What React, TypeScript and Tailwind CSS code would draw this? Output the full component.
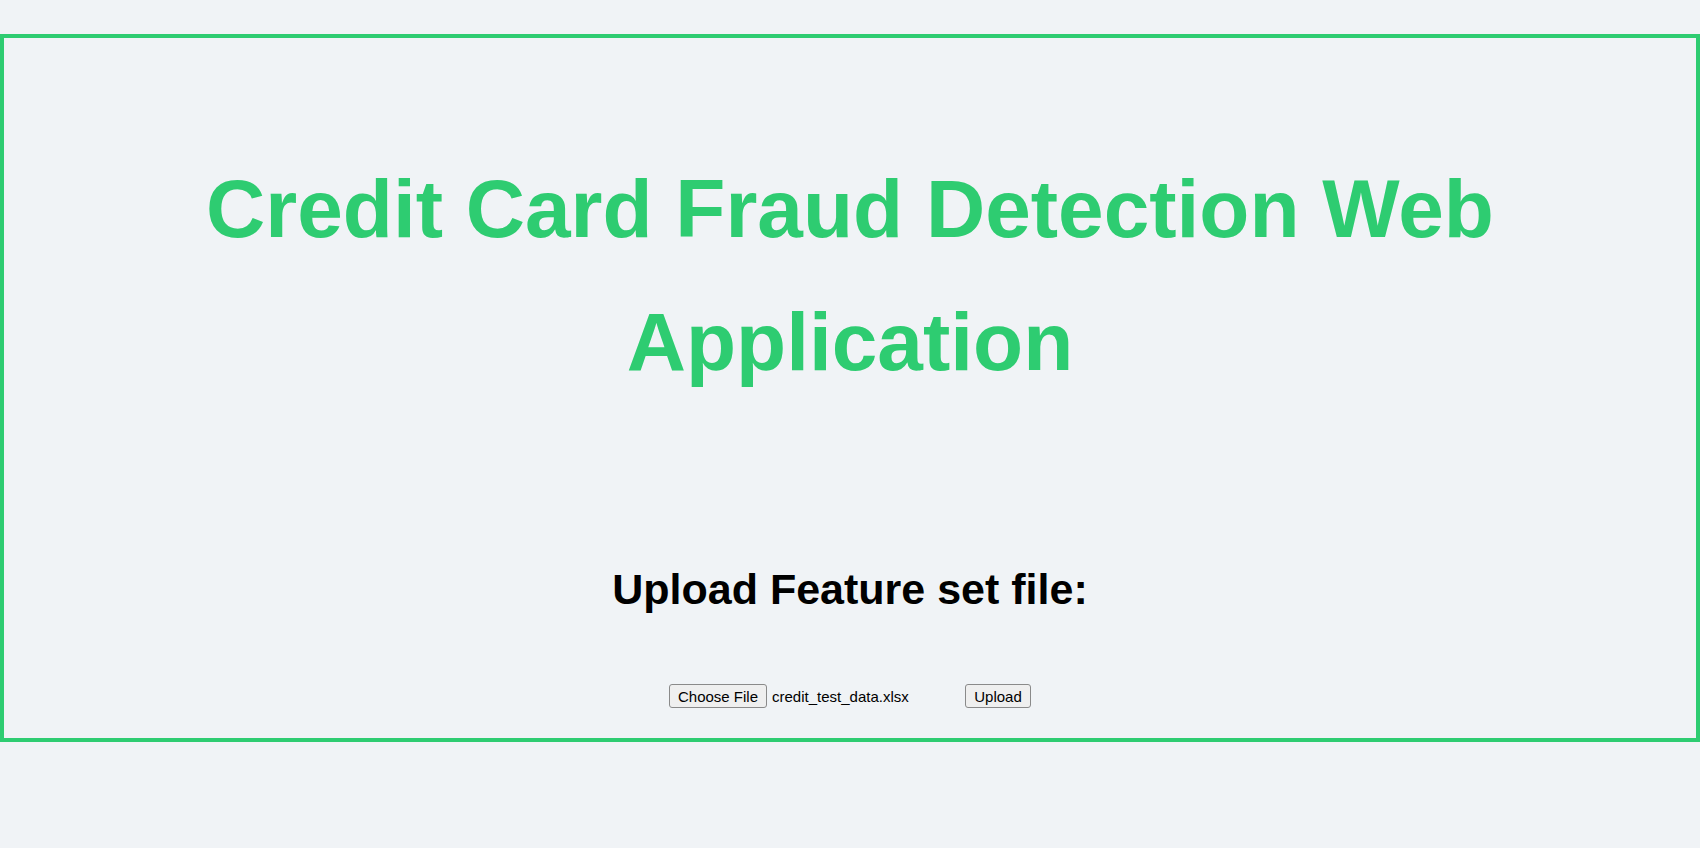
import React, { useState } from "react";

const App: React.FC = () => {
  const [fileName] = useState("credit_test_data.xlsx");

  return (
    <div className="min-h-[848px] w-full bg-[#f0f3f6] pt-[34px] font-['Liberation_Sans',Arial,sans-serif]">
      <div className="flex h-[708px] w-full flex-col items-center border-4 border-[#2ecc71]">
        <h1 className="mt-[104px] text-center text-[82px] font-bold leading-[133px] text-[#2ecc71]">
          Credit Card Fraud Detection Web Application
        </h1>
        <h2 className="mt-[157px] text-center text-[43px] font-bold leading-[49px] text-black">
          Upload Feature set file:
        </h2>
        <form
          className="mt-[70px] flex items-center text-[15px] text-black"
          onSubmit={(e) => e.preventDefault()}
        >
          <button
            type="button"
            className="flex h-[24px] w-[98px] items-center justify-center rounded-[3px] border border-[#8a8a8a] bg-[#efefef] leading-none"
          >
            Choose File
          </button>
          <span className="ml-[5px] w-[189px] leading-none">{fileName}</span>
          <button
            type="submit"
            className="ml-[4px] flex h-[24px] w-[66px] items-center justify-center rounded-[3px] border border-[#8a8a8a] bg-[#efefef] leading-none"
          >
            Upload
          </button>
        </form>
      </div>
    </div>
  );
};

export default App;
